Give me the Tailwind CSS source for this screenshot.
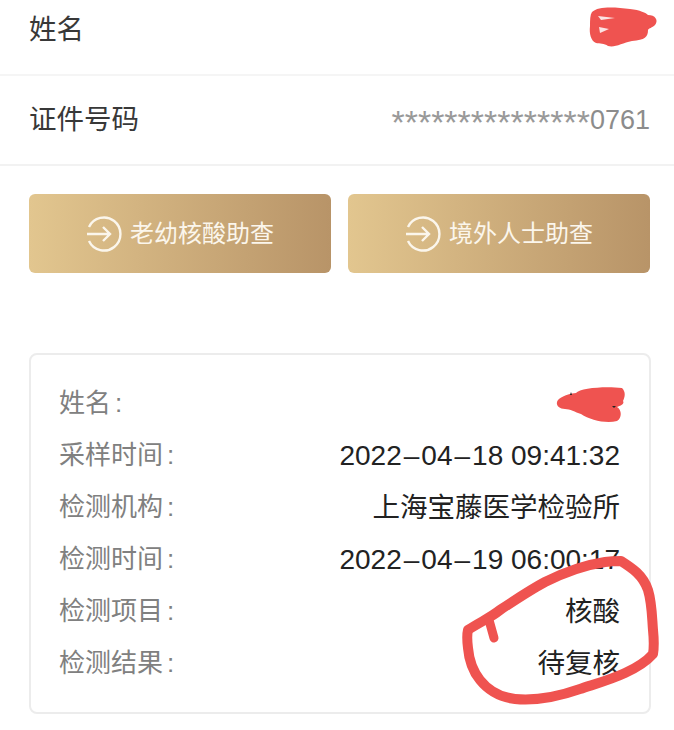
<!DOCTYPE html>
<html lang="zh-CN">
<head>
  <meta charset="UTF-8" />
  <meta name="viewport" content="width=device-width, initial-scale=1.0" />
  <title>核酸检测结果</title>
  <script src="https://cdn.jsdelivr.net/npm/@tailwindcss/browser@4"></script>
</head>
<body class="bg-white">
<div class="relative w-[674px] h-[730px] overflow-hidden bg-white font-['Liberation_Sans','Noto_Sans_CJK_SC',sans-serif]">
  <!-- Info rows -->
  <div class="flex h-[76px] items-center justify-between border-b-2 border-[#f5f5f5] pl-[29px] pr-[24px] pb-[15px]">
    <span class="text-[27.5px] text-[#383838]">姓名</span>
  </div>
  <div class="flex h-[90px] items-center justify-between border-b-2 border-[#f2f2f2] pl-[29px] pr-[24px]">
    <span class="text-[27.5px] text-[#383838]">证件号码</span>
    <span class="mt-[4px] text-[27px] leading-none text-[#8c8c8c]"><span class="text-[34px] leading-none align-[-5px] text-[#999999]">***************</span>0761</span>
  </div>

  <!-- Gold buttons -->
  <div class="mt-[28px] grid grid-cols-[302px_302px] gap-[17px] pl-[29px]">
    <div class="flex h-[79px] items-center justify-center gap-[8px] rounded-[6px] bg-gradient-to-r from-[#e2c68f] to-[#b89468] text-[24px] text-[#fbf6ec]">
      <svg class="w-[36px] h-[36px]" viewBox="0 0 36 36" fill="none" stroke="#fbf6ec" stroke-width="2.4">
        <path d="M3 11A16.5 16.5 0 1 1 3 25" />
        <path d="M1 18H24M17 11l7 7-7 7" />
      </svg>
      <span>老幼核酸助查</span>
    </div>
    <div class="flex h-[79px] items-center justify-center gap-[8px] rounded-[6px] bg-gradient-to-r from-[#e2c68f] to-[#b89468] text-[24px] text-[#fbf6ec]">
      <svg class="w-[36px] h-[36px]" viewBox="0 0 36 36" fill="none" stroke="#fbf6ec" stroke-width="2.4">
        <path d="M3 11A16.5 16.5 0 1 1 3 25" />
        <path d="M1 18H24M17 11l7 7-7 7" />
      </svg>
      <span>境外人士助查</span>
    </div>
  </div>

  <!-- Result card -->
  <div class="ml-[29px] mt-[80px] flex h-[361px] w-[622px] flex-col justify-center rounded-[8px] border-2 border-[#ececec] pl-[28px] pr-[29px] text-[27.5px] text-[#222222]">
    <div class="flex h-[52px] items-center justify-between">
      <span class="text-[26px] text-[#808080]">姓名<span class="ml-[4px]">:</span></span>
    </div>
    <div class="flex h-[52px] items-center justify-between">
      <span class="text-[26px] text-[#808080]">采样时间<span class="ml-[4px]">:</span></span>
      <span class="text-[28px]">2022<span class="mx-[2px]">–</span>04<span class="mx-[2px]">–</span>18 09:41:32</span>
    </div>
    <div class="flex h-[52px] items-center justify-between">
      <span class="text-[26px] text-[#808080]">检测机构<span class="ml-[4px]">:</span></span>
      <span>上海宝藤医学检验所</span>
    </div>
    <div class="flex h-[52px] items-center justify-between">
      <span class="text-[26px] text-[#808080]">检测时间<span class="ml-[4px]">:</span></span>
      <span class="text-[28px]">2022<span class="mx-[2px]">–</span>04<span class="mx-[2px]">–</span>19 06:00:17</span>
    </div>
    <div class="flex h-[52px] items-center justify-between">
      <span class="text-[26px] text-[#808080]">检测项目<span class="ml-[4px]">:</span></span>
      <span>核酸</span>
    </div>
    <div class="flex h-[52px] items-center justify-between">
      <span class="text-[26px] text-[#808080]">检测结果<span class="ml-[4px]">:</span></span>
      <span>待复核</span>
    </div>
  </div>

  <!-- Red marker scribbles drawn over the screenshot -->
  <svg class="absolute left-0 top-0 w-[674px] h-[730px] pointer-events-none" viewBox="0 0 674 730" fill="none" stroke="#ef5350" stroke-linecap="round" stroke-linejoin="round">
    <path stroke-width="10" d="M621 561C632 568 643 575 648 590C652 603 652 618 653 630C654 640 654 648 653 654C645 663 636 668 625 673C610 680 595 684 580 689C560 696 535 701 515 699C498 697 488 690 480 680C472 670 469 660 468 648C467 640 467 634 468 630C480 622 490 618 500 610C515 600 530 590 545 582C565 572 585 565 605 562C612 561 618 561 621 561Z" />
    <path stroke-width="9" d="M489 620L494 638" />
    <path fill="#ef5350" stroke="none" d="M592 12C598 6 615 7 630 9C640 10 646 13 648 15C655 15 659 20 655 25C652 28 649 28 648 30C648 37 645 40 632 41C622 43 615 48 608 46C604 43 600 44 596 43C591 41 589 34 590 26C590 20 590 15 592 12Z" />
    <path fill="#fbe3e3" stroke="none" d="M598 16L615 18L601 20ZM599 27L609 29L600 33Z" />
    <path fill="#ef5350" stroke="none" d="M557 402C558 398 566 394 576 393C580 388 605 386 622 388C626 392 625 397 623 401C625 404 620 406 617 407C622 410 622 418 617 421C606 424 590 420 581 414C575 412 570 409 565 409C560 409 556 406 557 402Z" />
    <path fill="#222222" stroke="none" d="M571 392l1 3l-2 0ZM612 406l4 0l-2 2Z" />
  </svg>
</div>
</body>
</html>
